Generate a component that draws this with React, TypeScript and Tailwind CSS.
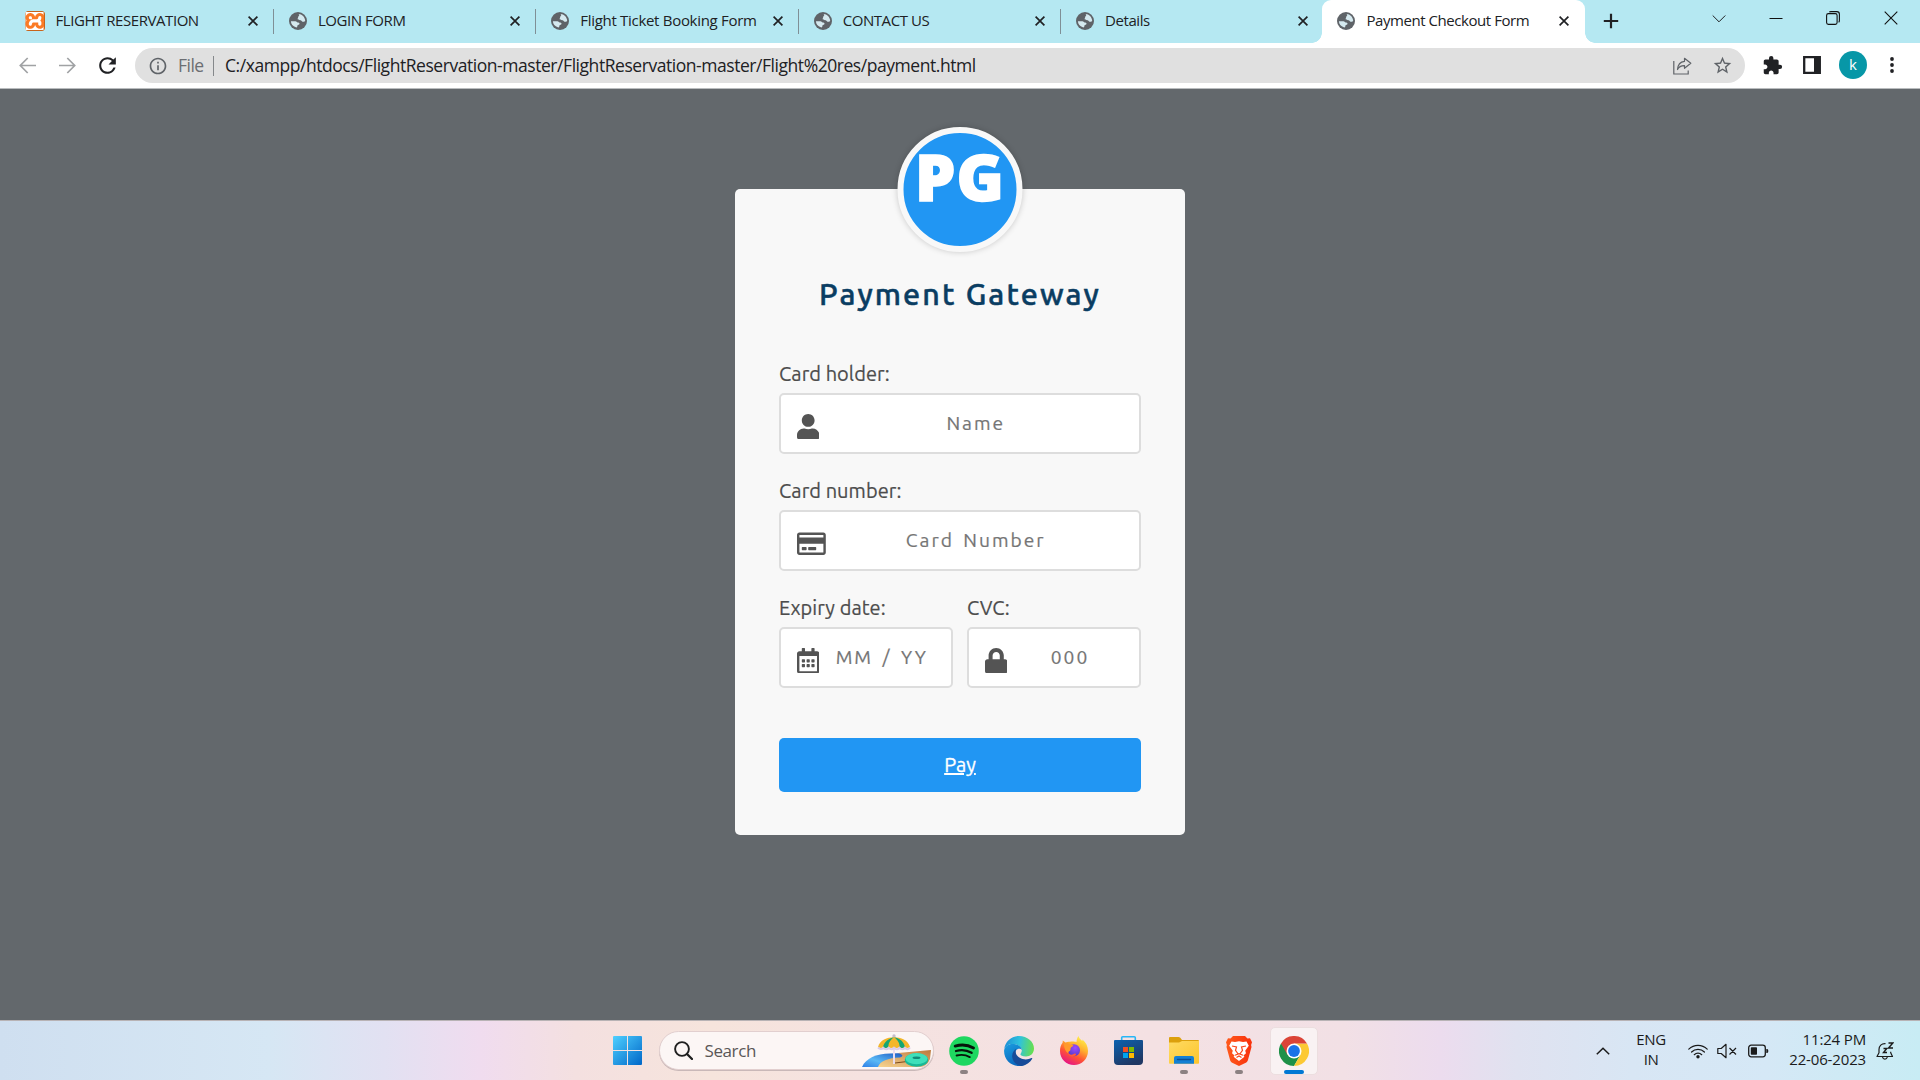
import type { ReactNode } from "react";
import { FaUser, FaRegCreditCard, FaRegCalendarAlt, FaLock } from "react-icons/fa";
import { SiXampp } from "react-icons/si";
import { MdRefresh, MdStarBorder, MdExtension, MdInfoOutline } from "react-icons/md";

function Globe() {
  return (
    <svg viewBox="0 0 18 18" className="size-[18px]">
      <circle cx="9" cy="9" r="9" fill="#5f6368" />
      <path d="M9.6 1.9C13 2 16 5 16.2 8.7c-.7 1-1.600 1.300-2.600 1.100-.9-.2-.9-1.100-1.700-1.500-.9-.4-2.400.1-3-.8-.6-.9.2-1.700.3-2.600.1-.8.9-.8 1-1.600.1-.6-.3-.9-.6-1.400z" fill="#d5e9ef" />
      <path d="M1.900 9.200h4.600c1 .1 1.300 1 2.200 1.300.8.2 1.600.1 1.800.9.2.9-.7 1.300-1.500 1.500-.7.2-.6 1-.7 1.700-.1.8-.9 1-1.500.7C4 14.200 1.900 12 1.900 9.200z" fill="#d5e9ef" />
    </svg>
  );
}

function CloseX({ className }: { className: string }) {
  return (
    <svg viewBox="0 0 10 10" className={className}>
      <path d="M.6.6l8.800 8.800M9.400.6L.6 9.400" stroke="#202124" strokeWidth="1.700" fill="none" />
    </svg>
  );
}

type TabProps = { title: string; active?: boolean; first?: boolean; last?: boolean; tracking?: string };

function Tab({ title, active, first, last, tracking = "tracking-[-0.44px]" }: TabProps) {
  return (
    <div
      className={
        active
          ? "relative h-[43px] w-[263px] shrink-0 rounded-t-[9px] bg-white"
          : "relative h-[43px] w-[262.4px] shrink-0"
      }
    >
      <div className={first ? "flex h-[42px] items-center pl-[13.5px]" : "flex h-[42px] items-center pl-[15.5px]"}>
        <span className={first ? "w-[31px]" : "w-[29px]"}>
          {first ? (
            <span className="flex h-5 w-[20px] items-center justify-center rounded-[3px] border border-[#c8641c] bg-[#fb7a24]">
              <SiXampp className="size-[26px] shrink-0 text-white [clip-path:inset(4px)]" />
            </span>
          ) : (
            <Globe />
          )}
        </span>
        <span className={`mb-[2px] w-[193px] whitespace-nowrap text-[15px] leading-5 text-[#202124] ${tracking}`}>{title}</span>
        <CloseX className="ml-[-0.5px] size-[10px]" />
      </div>
      {!active && !last && <span className="absolute right-[-0.5px] top-[9px] h-[25px] w-px bg-[#7f8f96]" />}
      {active && (
        <>
          <span className="absolute bottom-0 left-[-10px] size-[10px] bg-[radial-gradient(circle_at_0_0,#b5e8f2_9.5px,#fff_10px)]" />
          <span className="absolute bottom-0 right-[-10px] size-[10px] bg-[radial-gradient(circle_at_100%_0,#b5e8f2_9.5px,#fff_10px)]" />
        </>
      )}
    </div>
  );
}

function TabStrip() {
  return (
    <div className="flex h-[43px] bg-[#b5e8f2] pl-[11px]">
      <Tab title="FLIGHT RESERVATION" first />
      <Tab title="LOGIN FORM" />
      <Tab title="Flight Ticket Booking Form" tracking="tracking-[-0.3px]" />
      <Tab title="CONTACT US" />
      <Tab title="Details" last />
      <div className="-ml-px flex flex-1">
        <Tab title="Payment Checkout Form" active />
        <div className="flex flex-1 items-start justify-between pl-[18px] pr-[22px]">
          <svg viewBox="0 0 16 16" className="mt-[13px] size-4">
            <path d="M8 .8v14.400M.8 8h14.400" stroke="#202124" strokeWidth="2.200" />
          </svg>
          <div className="flex pt-[11px]">
            <svg viewBox="0 0 14 14" className="mr-[43px] size-[14px]">
              <path d="M.7 4.500l6.300 6.300L13.300 4.500" stroke="#202124" fill="none" />
            </svg>
            <svg viewBox="0 0 14 14" className="mr-[43px] size-[14px]">
              <path d="M.5 7.500h13" stroke="#111" />
            </svg>
            <svg viewBox="0 0 14 14" className="mr-[44px] size-[14px]">
              <rect x=".6" y="2.600" width="10.500" height="10.800" rx="1.800" stroke="#111" strokeWidth="1.100" fill="none" />
              <path d="M3.300 1.100Q3.800.6 5 .6h5.800Q13.400.6 13.400 3.200v6.300q0 1.200-.7 1.900" stroke="#111" strokeWidth="1.100" fill="none" />
            </svg>
            <svg viewBox="0 0 14 14" className="size-[14px]">
              <path d="M.7.7l12.600 12.600M13.300.7L.7 13.300" stroke="#111" strokeWidth="1.100" />
            </svg>
          </div>
        </div>
      </div>
    </div>
  );
}

function Toolbar() {
  return (
    <div className="flex h-[46px] items-center border-b border-[#b9bcbe] bg-white pl-[19px] pb-px">
      <svg viewBox="0 0 17 17" className="mr-[23px] size-[17px]">
        <path d="M17 8.500H1.500M8.700 1L1.300 8.500l7.400 7.500" stroke="#a0a2a4" strokeWidth="1.700" fill="none" />
      </svg>
      <svg viewBox="0 0 17 17" className="mr-[19px] size-[17px]">
        <path d="M0 8.500h15.500M8.300 1l7.400 7.500L8.300 16" stroke="#a0a2a4" strokeWidth="1.700" fill="none" />
      </svg>
      <MdRefresh className="size-[25px] text-[#202124]" />
      <div className="ml-[15px] mt-px flex h-[35px] w-[1610px] items-center rounded-full bg-[#e0e0e0] pl-[12.5px] pr-[12px]">
        <MdInfoOutline className="size-[20px] text-[#5f6368]" />
        <span className="mb-px ml-[10.5px] w-[35px] text-[17.5px] leading-6 tracking-[-0.5px] text-[#6b6e72]">File</span>
        <span className="h-5 w-px bg-[#85888b]" />
        <span className="mb-px ml-[11px] flex-1 text-[17.5px] leading-6 tracking-[-0.45px] text-[#202124]">
          C:/xampp/htdocs/FlightReservation-master/FlightReservation-master/Flight%20res/payment.html
        </span>
        <svg viewBox="0 0 19 18" className="mr-[20px] h-[18px] w-[19px]">
          <path d="M.8 4v13h14.400v-3.500" stroke="#5f6368" strokeWidth="1.200" fill="none" />
          <path d="M11.500 1.300l6.300 5-6.300 5V8.600C8 8.500 5.800 9.800 4.500 12.500 4.800 8 7.400 4.800 11.500 4.300z" stroke="#5f6368" strokeWidth="1.200" fill="none" strokeLinejoin="round" />
        </svg>
        <MdStarBorder className="size-[21px] text-[#5f6368]" />
      </div>
      <MdExtension className="ml-[17px] size-[21px] text-[#202124]" />
      <svg viewBox="0 0 18 18" className="ml-[20px] size-[18px]">
        <path d="M1.200 1.200h15.600v15.600H1.200z" stroke="#202124" strokeWidth="2.300" fill="none" />
        <path d="M11 1h6v16h-6z" fill="#202124" />
      </svg>
      <span className="ml-[18px] flex size-7 items-center justify-center rounded-full bg-[#0797a7] pb-px text-[15px] text-white">k</span>
      <svg viewBox="0 0 4 16" className="ml-[23px] h-4 w-1">
        <circle cx="2" cy="2" r="1.900" fill="#202124" />
        <circle cx="2" cy="8" r="1.900" fill="#202124" />
        <circle cx="2" cy="14" r="1.900" fill="#202124" />
      </svg>
    </div>
  );
}

function Field({ label, placeholder, icon, inputClass }: { label: string; placeholder: string; icon: ReactNode; inputClass: string }) {
  return (
    <label className="block min-w-0 flex-1">
      <span className="mb-[9px] block text-[20px] leading-[21px] tracking-[0.05px] text-[#4c4c4c] [-webkit-text-stroke:0.2px]">{label}</span>
      <span className="flex h-[61px] items-center rounded-[5px] border-2 border-[#dddddd] bg-white pl-[16px]">
        <span className="w-0 shrink-0 pt-[6px] text-[#545454]">{icon}</span>
        <input
          className={`mb-px min-w-0 flex-1 bg-transparent text-center text-[19.2px] tracking-[2px] outline-none [-webkit-text-stroke:0.2px] placeholder:text-[#757575] ${inputClass}`}
          placeholder={placeholder}
        />
      </span>
    </label>
  );
}

function PaymentCard() {
  return (
    <div className="relative flex h-[646px] w-[450px] flex-col rounded-[5px] bg-[#f8f8f8] px-[44px] pt-[87px] font-['Ubuntu','Noto_Sans',sans-serif]">
      <div className="absolute left-1/2 top-[-62px] flex size-[125px] -translate-x-1/2 justify-center rounded-full border-[6px] border-[#f8f8f8] bg-[#2196f3] shadow-[0_0_6px_rgba(0,0,0,0.2)]">
        <span className="font-['Noto_Sans',sans-serif] text-[64px] font-black leading-[88px] tracking-[1px] text-white [-webkit-text-stroke:1.5px_white]">PG</span>
      </div>
      <h1 className="text-center text-[30.4px] font-medium leading-9 tracking-[2.1px] text-[#0a3d62] [-webkit-text-stroke:0.5px]">Payment Gateway</h1>
      <form className="mt-[51px] flex flex-col gap-[26px]">
        <Field label="Card holder:" placeholder="Name" icon={<FaUser className="h-[25.6px] w-[22.4px]" />} inputClass="pl-[15.5px]" />
        <Field label="Card number:" placeholder="Card Number" icon={<FaRegCreditCard className="h-[25.6px] w-[28.8px]" />} inputClass="pl-[15.5px] [word-spacing:3px]" />
        <div className="flex gap-[14px]">
          <Field label="Expiry date:" placeholder="MM / YY" icon={<FaRegCalendarAlt className="h-[25.6px] w-[22.4px]" />} inputClass="pl-[15.5px] [word-spacing:3px]" />
          <Field label="CVC:" placeholder="000" icon={<FaLock className="h-[25.6px] w-[22.4px]" />} inputClass="pl-[16px]" />
        </div>
        <button type="button" className="mt-6 h-[54px] rounded-[5px] bg-[#2196f3] text-[20px] text-white underline decoration-2 [-webkit-text-stroke:0.3px]">
          Pay
        </button>
      </form>
    </div>
  );
}

function WindowsLogo() {
  return (
    <svg viewBox="0 0 29 29" className="size-[29px]">
      <defs>
        <linearGradient id="win" x1="0" y1="0" x2="1" y2="1">
          <stop offset="0" stopColor="#4fd0ff" />
          <stop offset="1" stopColor="#0067c8" />
        </linearGradient>
      </defs>
      <path d="M1 0h13v14H0V1q0-1 1-1zM15 0h13q1 0 1 1v13H15zM0 15h14v14H1q-1 0-1-1zM15 15h14v13q0 1-1 1H15z" fill="url(#win)" />
    </svg>
  );
}

function Beach() {
  return (
    <svg viewBox="0 0 70 34" className="h-[34px] w-[70px]">
      <defs>
        <linearGradient id="sea" x1="0" y1="1" x2="1" y2="0">
          <stop offset="0" stopColor="#2f7fe6" />
          <stop offset=".4" stopColor="#5ab9f5" />
          <stop offset="1" stopColor="#1b55c0" />
        </linearGradient>
        <linearGradient id="sand" x1="0" y1="1" x2="1" y2="0">
          <stop offset="0" stopColor="#f8d490" />
          <stop offset="1" stopColor="#bb783c" />
        </linearGradient>
      </defs>
      <path d="M0 33C4 24 14 20 28 19.500L42 19l-2 5-22 9z" fill="url(#sea)" />
      <path d="M16 33c2-6 10-9 22-9.500 4-1 3-3-2-4.500L69 16l-1 9q-3 8-10 8z" fill="url(#sand)" />
      <path d="M33 29l12-1.500" stroke="#7c4b1f" />
      <path d="M32 5v25" stroke="#e9dcee" strokeWidth="2" />
      <circle cx="32" cy="1.900" r="1.700" fill="#c5bccb" />
      <path d="M16 13C18 6 25 3.200 32 3.200S46 6 48 13q-3 2-5 0-3 2-5.500 0-3 2-5.500 0-3 2-5.500 0-3 2-5.500 0-2 2-5 0z" fill="#f3b62a" />
      <path d="M21 13C22 8 27 4 32 3.200 28 6 26 10 26.500 13q-3 2-5.500 0zM37.500 13C38 10 36 6 32 3.200 38 4 42 8 43 13q-3 2-5.500 0z" fill="#14a673" />
      <path d="M16 13.500q3 3 5.200.3 3 3 5.400 0 3 3 5.400 0 3 3 5.400 0 3 3 5.400 0 3 3 5.200-.3" stroke="#d9cbe8" strokeWidth="2" fill="none" />
      <ellipse cx="54.500" cy="26" rx="11.700" ry="6.700" fill="#18b897" />
      <ellipse cx="54.500" cy="24.600" rx="11" ry="5.600" fill="#3ee0ba" />
      <ellipse cx="54.500" cy="23.800" rx="4" ry="1.300" fill="#118a78" />
    </svg>
  );
}

function Spotify() {
  return (
    <svg viewBox="0 0 30 30" className="size-[30px]">
      <circle cx="15" cy="15" r="14.800" fill="#1ed760" />
      <g stroke="#06130a" fill="none" strokeLinecap="round">
        <path d="M6.200 10.100c6-1.800 13-1.200 18.300 1.900" strokeWidth="2.900" />
        <path d="M7 15c5.300-1.500 11-.9 15.600 1.800" strokeWidth="2.300" />
        <path d="M7.600 19.500c4.600-1.200 9.300-.7 13.200 1.600" strokeWidth="1.900" />
      </g>
    </svg>
  );
}

function Edge() {
  return (
    <svg viewBox="0 0 30 30" className="size-[30px]">
      <defs>
        <linearGradient id="eTop" x1="0" y1=".4" x2="1" y2=".5">
          <stop offset="0" stopColor="#1d8fd6" />
          <stop offset=".5" stopColor="#2fc2dd" />
          <stop offset="1" stopColor="#69e04b" />
        </linearGradient>
        <linearGradient id="eLeft" x1="0" y1="0" x2=".5" y2="1">
          <stop offset="0" stopColor="#1b9de0" />
          <stop offset="1" stopColor="#0a66bd" />
        </linearGradient>
      </defs>
      <path d="M.3 13C1.200 5.500 7.400 0 15 0c8.300 0 15 5.800 15 12.500 0 5-3.800 8-8 8-3.800 0-5.600-1.300-5.600-2.200 0-.8 1.400-1.600 1.400-4.100C17.800 10.500 13 8 8.600 8 4.500 8 1.500 10 .3 13z" fill="url(#eTop)" />
      <path d="M.1 14.500C.5 10.500 4 7.900 8.600 7.900c5 0 9 2.800 9.200 6.100-1.300-2.200-5.800-2-6.300 2.500C11 22 15 28 21 28.700 18 30 16 30 15 30 6.500 30-.3 23 .1 14.500z" fill="url(#eLeft)" />
      <path d="M12.700 12.600C10 14 7.800 17 8.200 21c.5 4.600 4 8.200 9.500 8.900 5-1 8.600-3.600 10.500-7.200.2-.6-.3-.8-.7-.6-6 3-14.500.7-15.800-5.600-.3-1.600 0-3 1-3.900z" fill="#174b99" />
    </svg>
  );
}

function Firefox() {
  return (
    <svg viewBox="0 0 28 29" className="h-[29px] w-7">
      <defs>
        <linearGradient id="ff" x1=".8" y1=".05" x2=".3" y2="1">
          <stop offset="0" stopColor="#fff04a" />
          <stop offset=".35" stopColor="#ffb02e" />
          <stop offset=".65" stopColor="#ff5434" />
          <stop offset="1" stopColor="#e4108a" />
        </linearGradient>
        <radialGradient id="ffc" cx=".6" cy=".3" r=".8">
          <stop offset="0" stopColor="#a04bff" />
          <stop offset="1" stopColor="#4a3ac4" />
        </radialGradient>
      </defs>
      <path d="M18.500 0c.4 2.200 2.200 3.600 3.900 5l.1-1.500c3.500 3 5.500 6.800 5.500 11.500C28 23 21.700 29 14 29S0 23 0 15c0-3 .8-6 2.600-8.200L2.800 4.500l2.700 2C7 5.800 8.500 5.600 10 5.800c2.500-.6 5.500 0 6.500.2C16.600 3.500 17.300 1.500 18.500 0z" fill="url(#ff)" />
      <circle cx="14" cy="14.300" r="6" fill="url(#ffc)" />
      <path d="M4 8c2-1 4.500-.6 6 .8 1.200.2 2.500 0 3.400.5-.2 1.400-2.200 1.700-2.700 2.800-.4 1.200.2 2.200-.9 2.900-1 .4-1.700 1-1.600 2.500C5.500 15.500 4 12 4 8z" fill="#ff9a2c" />
      <path d="M8.200 17c1.200 2 3.800 2 5.500.9 1-.6 2-.5 2.300.1.500 1-1.500 2.700-4 2.600-2.200-.1-3.800-1.600-3.800-3.600z" fill="#ff5a3c" />
    </svg>
  );
}

function Store() {
  return (
    <svg viewBox="0 0 29 29" className="-ml-px size-[29px]">
      <defs>
        <linearGradient id="st" x1="0" y1="0" x2=".5" y2="1">
          <stop offset="0" stopColor="#0c62b0" />
          <stop offset="1" stopColor="#1f3864" />
        </linearGradient>
      </defs>
      <path d="M7.700 6V1.800q0-1 1-1h11.600q1 0 1 1V6" stroke="#27b6f6" strokeWidth="1.600" fill="none" />
      <path d="M0 5q0-1 1-1h27q1 0 1 1v20q0 4-4 4H4q-4 0-4-4z" fill="url(#st)" />
      <path d="M9 11h5v5H9z" fill="#f25022" />
      <path d="M15 11h5v5h-5z" fill="#7fba00" />
      <path d="M9 17h5v5H9z" fill="#00a4ef" />
      <path d="M15 17h5v5h-5z" fill="#ffb900" />
    </svg>
  );
}

function Explorer() {
  return (
    <svg viewBox="0 0 30 27" className="h-[27px] w-[30px]">
      <defs>
        <linearGradient id="fo" x1="0" y1="0" x2="1" y2="1">
          <stop offset="0" stopColor="#ffdb63" />
          <stop offset="1" stopColor="#fcc52c" />
        </linearGradient>
      </defs>
      <path d="M0 1q0-1 1-1h8.500q1 0 1.800.8L13 3h16q1 0 1 1v4H0z" fill="#dca00c" />
      <path d="M0 5.500h10L13 4h17v22q0 .8-.8.8H.8Q0 26.800 0 26z" fill="url(#fo)" />
      <path d="M5 26.800V21q0-2 2-2h16q2 0 2 2v5.800z" fill="#1480d4" />
      <path d="M8.500 22.500h13" stroke="#0b4f94" strokeWidth="1.400" strokeLinecap="round" />
    </svg>
  );
}

function Brave() {
  return (
    <svg viewBox="0 0 26 30" className="h-[30px] w-[26px]">
      <defs>
        <linearGradient id="br" x1="0" y1="0" x2="1" y2="0">
          <stop offset="0" stopColor="#ff5a1c" />
          <stop offset="1" stopColor="#f8300c" />
        </linearGradient>
      </defs>
      <path d="M7 0h12l2.500 2.500L24 2.300l2 4-.9 2.700.4 2-3.700 13.500q-.4 1.200-1.500 2L13 30l-7.300-3.500q-1.100-.8-1.500-2L.5 11l.4-2L0 6.300l2-4 2.500.2z" fill="url(#br)" />
      <path d="M5.500 5.500l3.500.6 4-.8 4 .8 3.500-.6 2.300 4.300-3.600 5 .8 2.500-2.600 2.200 1 1.200L13 25l-5.400-4.300 1-1.200L6 17.300l.8-2.500-3.600-5z" fill="#fff" />
      <path d="M6 10l4.500 1-1 3.300 2.300 3.200M20 10l-4.500 1 1 3.300-2.300 3.200M9 19.300l4-1.700 4 1.700M10.500 21.500l2.500-1.500 2.500 1.500" stroke="#fb471a" strokeWidth="1.200" fill="none" />
    </svg>
  );
}

function Chrome() {
  return (
    <svg viewBox="0 0 30 30" className="size-[30px]">
      <path d="M2 7.500A15 15 0 0 0 15 30l6.500-11.200L15 15z" fill="#1e9148" />
      <path d="M28 7.500A15 15 0 0 1 15 30l6.500-11.200L15 7.500z" fill="#fcc934" />
      <path d="M2 7.500L8.500 18.700 15 15V7.500h13A15 15 0 0 0 2 7.500z" fill="#db4437" />
      <circle cx="15" cy="15" r="7.500" fill="#fff" />
      <circle cx="15" cy="15" r="5.900" fill="#1a73e8" />
    </svg>
  );
}

function TaskItem({ children, state }: { children: ReactNode; state?: "open" | "active" }) {
  return (
    <div
      className={
        state === "active"
          ? "flex h-12 w-12 flex-col items-center rounded-[5px] border border-[#ecdedf] bg-[#f9f2f3]"
          : "flex h-12 w-12 flex-col items-center border border-transparent"
      }
    >
      <span className="mt-2 flex h-[30px] w-[30px] items-center justify-center">{children}</span>
      {state === "open" && <span className="mt-[4px] h-1 w-2 rounded-full bg-[#8c8182]" />}
      {state === "active" && <span className="mt-[4px] h-1 w-5 rounded-full bg-[#0078d4]" />}
    </div>
  );
}

function Tray() {
  return (
    <div className="flex items-center text-[#1b1b1b]">
      <svg viewBox="0 0 14 8" className="h-2 w-[14px]">
        <path d="M.8 7.200L7 1.200l6.200 6" stroke="currentColor" strokeWidth="1.500" fill="none" />
      </svg>
      <div className="mb-[3px] ml-[20px] w-[42px] whitespace-nowrap text-center text-[15px] leading-5 tracking-[-0.4px]">
        ENG
        <br />
        IN
      </div>
      <svg viewBox="0 0 20 16" className="ml-[16px] h-4 w-5">
        <g stroke="currentColor" strokeWidth="1.200" fill="none" strokeLinecap="round">
          <path d="M.8 6.200a13 13 0 0 1 18.400 0M3.600 9a9 9 0 0 1 12.800 0M6.300 11.700a5.300 5.300 0 0 1 7.400 0" />
        </g>
        <circle cx="10" cy="13.800" r="1.700" fill="currentColor" />
      </svg>
      <svg viewBox="0 0 20 16" className="ml-[9px] h-4 w-5">
        <path d="M.8 5.500h3.400L9 1.300v13.400l-4.800-4.200H.8zM12.500 5l6.500 6.500M19 5l-6.500 6.500" stroke="currentColor" strokeWidth="1.200" fill="none" strokeLinejoin="round" />
      </svg>
      <svg viewBox="0 0 21 14" className="ml-[11px] h-[14px] w-[21px]">
        <rect x=".7" y="1.200" width="16.600" height="11.600" rx="2.500" stroke="currentColor" strokeWidth="1.300" fill="none" />
        <rect x="2.800" y="3.300" width="6.200" height="7.400" rx=".8" fill="currentColor" />
        <path d="M18.300 5h1q1 .3 1 2t-1 2h-1z" fill="currentColor" />
      </svg>
      <div className="mb-[4px] ml-[17px] w-[80px] whitespace-nowrap text-right text-[15px] leading-5 tracking-[-0.15px]">
        11:24 PM
        <br />
        22-06-2023
      </div>
      <svg viewBox="0 0 18 18" className="ml-[10px] size-[18px]">
        <path d="M9.500 1.600C5.500 1.300 3 4 3 7.500v3.300L1 14.500h15.500l-1.800-3.700v-1M6.500 15c.3 1.500 1.300 2.200 2.400 2.200s2.100-.7 2.400-2.200" stroke="currentColor" strokeWidth="1.200" fill="none" strokeLinejoin="round" />
        <path d="M12.500 1h4.300l-4.300 5h4.500M7.500 6.500h3.300l-3.300 4h3.500" stroke="currentColor" strokeWidth="1.400" fill="none" />
      </svg>
    </div>
  );
}

function Taskbar() {
  return (
    <div className="flex h-[60px] items-center justify-between border-t border-[#b8b3b5] bg-[linear-gradient(90deg,#cfdff0_0%,#d6e7f4_14%,#e2e1f2_20%,#f0dcef_25%,#f4e0e0_30%,#f6e4dc_37%,#f5e2e0_45%,#f4e1e3_60%,#f2e0e5_70%,#ecdcee_75%,#e0e2f0_79%,#d8e6f4_85%,#d5e8f6_92%,#c8ecf4_100%)] pr-[26px]">
      <div className="flex items-center pl-[613px]">
        <WindowsLogo />
        <div className="ml-[17px] flex h-[39px] w-[275px] items-center overflow-hidden rounded-full border border-[#e2cfcf] bg-[#fcf6f5] pl-[13.5px] shadow-[0_1px_0_#c9b8b8]">
          <svg viewBox="0 0 19 19" className="size-[19px]">
            <circle cx="8" cy="8" r="6.900" stroke="#1f1f1f" strokeWidth="1.900" fill="none" />
            <path d="M13 13l5 5" stroke="#1f1f1f" strokeWidth="2.300" strokeLinecap="round" />
          </svg>
          <span className="ml-[12px] flex-1 text-[17px] leading-6 tracking-[-0.4px] text-[#5a5657]">Search</span>
          <div className="mr-px">
            <Beach />
          </div>
        </div>
        <div className="ml-[6px] flex gap-[7px]">
          <TaskItem state="open"><Spotify /></TaskItem>
          <TaskItem><Edge /></TaskItem>
          <TaskItem><Firefox /></TaskItem>
          <TaskItem><Store /></TaskItem>
          <TaskItem state="open"><Explorer /></TaskItem>
          <TaskItem state="open"><Brave /></TaskItem>
          <TaskItem state="active"><Chrome /></TaskItem>
        </div>
      </div>
      <Tray />
    </div>
  );
}

export default function App() {
  return (
    <div className="flex h-[1080px] w-[1920px] flex-col overflow-hidden font-['Open_Sans','Noto_Sans',sans-serif]">
      <TabStrip />
      <Toolbar />
      <main className="flex flex-1 justify-center bg-[#63686c] pt-[100px]">
        <PaymentCard />
      </main>
      <Taskbar />
    </div>
  );
}
